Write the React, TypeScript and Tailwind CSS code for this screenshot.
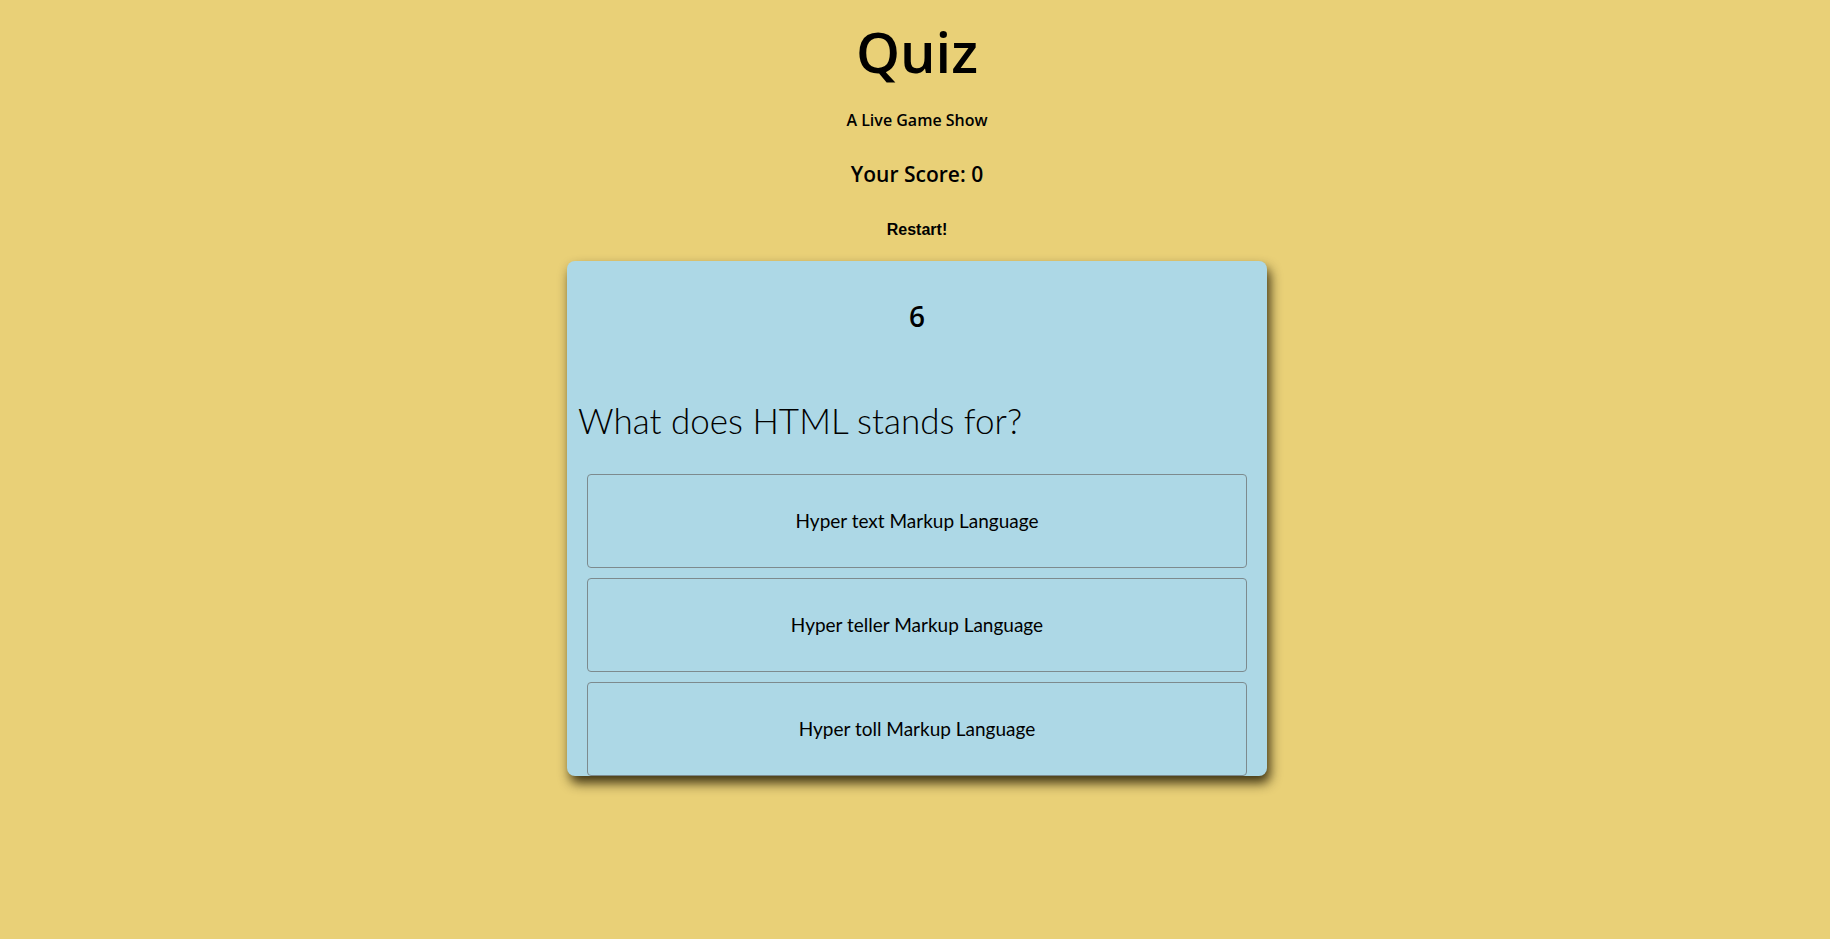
const answers = [
  "Hyper text Markup Language",
  "Hyper teller Markup Language",
  "Hyper toll Markup Language",
];

function App() {
  return (
    <div className="min-h-screen w-full bg-[#e9d077] pl-[4px] flex flex-col items-center text-black font-['Lato','Noto_Sans',sans-serif]">
      <h1 className="mt-[15px] text-[56px] leading-[72px] font-semibold font-['Open_Sans','Noto_Sans',sans-serif]">
        Quiz
      </h1>
      <p className="mt-[23px] text-[16px] leading-[20px] font-semibold font-['Open_Sans',sans-serif]">
        A Live Game Show
      </p>
      <h2 className="mt-[30px] text-[21px] leading-[28px] font-semibold font-['Open_Sans',sans-serif]">
        Your Score: 0
      </h2>
      <button className="mt-[32px] text-[16px] leading-[20px] font-bold font-['Liberation_Sans',Arial,sans-serif]">
        Restart!
      </button>
      <div className="mt-[21px] w-[700px] h-[515px] overflow-hidden rounded-lg bg-[#add8e6] shadow-[3px_7px_12px_rgba(30,22,0,0.85)] flex flex-col">
        <div className="pt-[38px] text-center text-[28px] leading-[34px] font-semibold font-['Open_Sans',sans-serif]">
          6
        </div>
        <h3 className="mt-[67px] pl-[11px] text-[35px] leading-[40px] font-light">
          What does HTML stands for?
        </h3>
        <div className="mt-[34px] mx-[20px] flex flex-col gap-[10px]">
          {answers.map((a, i) => (
            <button
              key={i}
              className="h-[94px] w-full shrink-0 rounded border border-[#7d8a8e] bg-[#add8e6] text-[19px] font-normal"
            >
              {a}
            </button>
          ))}
        </div>
      </div>
    </div>
  );
}

export default App;
